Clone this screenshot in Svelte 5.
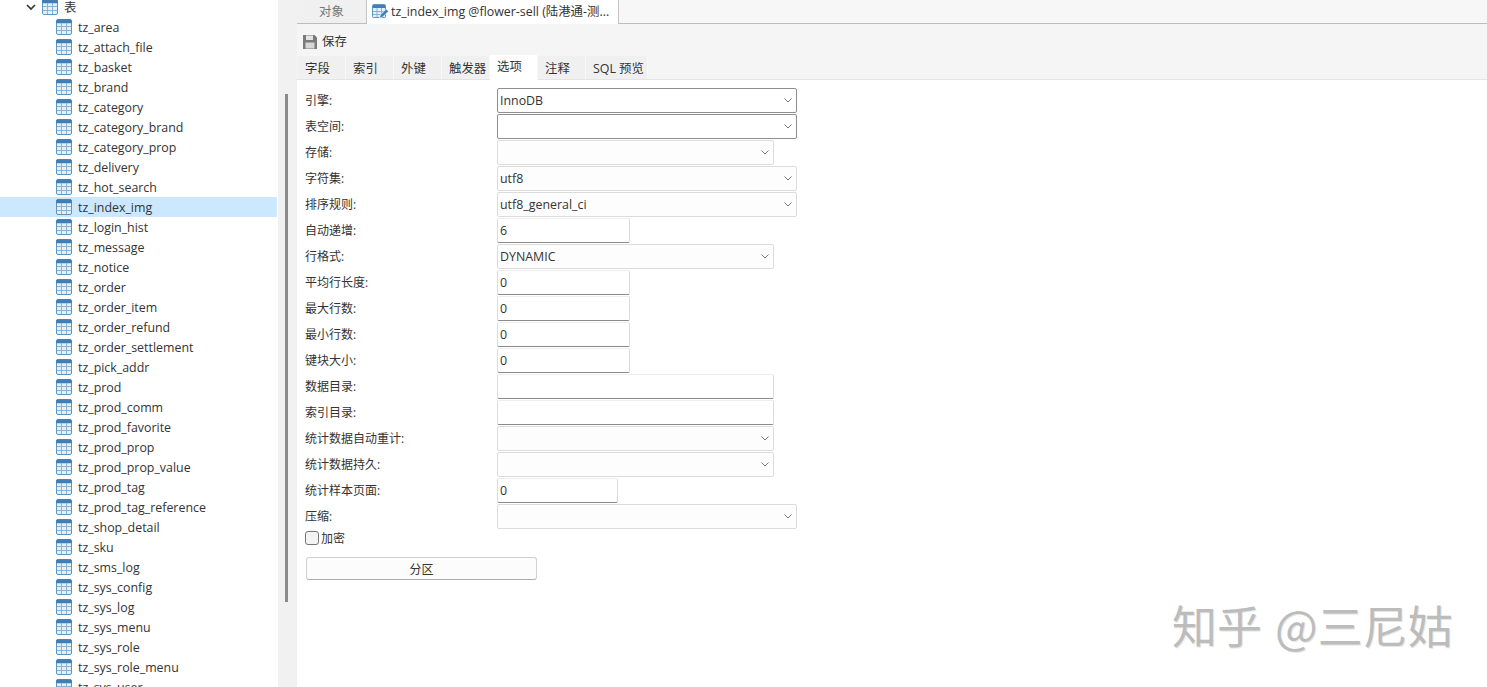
<script>
  const tables = ['tz_area','tz_attach_file','tz_basket','tz_brand','tz_category','tz_category_brand','tz_category_prop','tz_delivery','tz_hot_search','tz_index_img','tz_login_hist','tz_message','tz_notice','tz_order','tz_order_item','tz_order_refund','tz_order_settlement','tz_pick_addr','tz_prod','tz_prod_comm','tz_prod_favorite','tz_prod_prop','tz_prod_prop_value','tz_prod_tag','tz_prod_tag_reference','tz_shop_detail','tz_sku','tz_sms_log','tz_sys_config','tz_sys_log','tz_sys_menu','tz_sys_role','tz_sys_role_menu','tz_sys_user']

  const tabs = ['字段','索引','外键','触发器','选项','注释','SQL 预览']

  // size: wide 300, mid 277, num 133, small 121
  const rows = [
    { label: '引擎:', kind: 'select', size: 'wide', value: 'InnoDB', dark: true },
    { label: '表空间:', kind: 'select', size: 'wide', value: '', dark: true },
    { label: '存储:', kind: 'select', size: 'mid', value: '' },
    { label: '字符集:', kind: 'select', size: 'wide', value: 'utf8' },
    { label: '排序规则:', kind: 'select', size: 'wide', value: 'utf8_general_ci' },
    { label: '自动递增:', kind: 'input', size: 'num', value: '6' },
    { label: '行格式:', kind: 'select', size: 'mid', value: 'DYNAMIC' },
    { label: '平均行长度:', kind: 'input', size: 'num', value: '0' },
    { label: '最大行数:', kind: 'input', size: 'num', value: '0' },
    { label: '最小行数:', kind: 'input', size: 'num', value: '0' },
    { label: '键块大小:', kind: 'input', size: 'num', value: '0' },
    { label: '数据目录:', kind: 'input', size: 'mid', value: '' },
    { label: '索引目录:', kind: 'input', size: 'mid', value: '' },
    { label: '统计数据自动重计:', kind: 'select', size: 'mid', value: '' },
    { label: '统计数据持久:', kind: 'select', size: 'mid', value: '' },
    { label: '统计样本页面:', kind: 'input', size: 'small', value: '0' },
    { label: '压缩:', kind: 'select', size: 'wide', value: '' }
  ]
</script>

{#snippet tableIcon()}
  <svg class="table-icon" width="16" height="16" viewBox="0 0 16 16">
    <rect x="0.5" y="0.5" width="15" height="15" rx="1.5" fill="#e3eff9" stroke="#5a96c6" />
    <path d="M0.5 4V2a1.5 1.5 0 0 1 1.5-1.5h12A1.5 1.5 0 0 1 15.5 2v2z" fill="#3f7fb5" stroke="#3f7fb5" stroke-width="0.5" />
    <path d="M5.5 4v11M10.5 4v11M1 7.5h14M1 11.5h14" stroke="#86b4d9" fill="none" />
  </svg>
{/snippet}

<div class="app">
  <aside class="tree">
    <div class="tree-list">
      <div class="row root">
        <svg width="10" height="10" viewBox="0 0 10 10">
          <path d="M1 3l4 4 4-4" fill="none" stroke="#333" stroke-width="1.6" />
        </svg>
        {@render tableIcon()}
        <span>表</span>
      </div>
      {#each tables as name}
        <div class="row" class:selected={name === 'tz_index_img'}>
          {@render tableIcon()}
          <span>{name}</span>
        </div>
      {/each}
    </div>
  </aside>

  <div class="gutter">
    <div class="scroll-thumb"></div>
  </div>

  <main class="main">
    <div class="doc-tabs">
      <div class="doc-tab">对象</div>
      <div class="doc-tab active">
        <svg width="17" height="17" viewBox="0 0 17 17">
          <rect x="0.5" y="1.5" width="13" height="13" rx="1" fill="#e3eff9" stroke="#5a96c6" />
          <path d="M1 2h12v3H1z" fill="#3f7fb5" />
          <path d="M5 5v9M9.5 5v9M1 8.5h12M1 11.5h12" stroke="#86b4d9" fill="none" />
          <path d="M7.5 15l.8-3 6-6 2.2 2.2-6 6z" fill="#3f7fb5" stroke="#fff" stroke-width="0.6" />
        </svg>
        <span>tz_index_img @flower-sell (陆港通-测...</span>
      </div>
    </div>

    <div class="toolbar">
      <svg width="14" height="15" viewBox="0 0 14 15">
        <path d="M0 1h11.5L14 3.5V15H0z" fill="#7a7a7a" />
        <rect x="3" y="1.5" width="7" height="4.5" fill="#e4e4e4" />
        <rect x="2.5" y="8.5" width="9" height="6" fill="#d6d6d6" />
      </svg>
      <span>保存</span>
    </div>

    <div class="sub-tabs">
      {#each tabs as tab}
        <div class="sub-tab" class:active={tab === '选项'}>{tab}</div>
      {/each}
    </div>

    <div class="form">
      {#each rows as row}
        <div class="form-row">
          <span class="label">{row.label}</span>
          <div class="field {row.kind} {row.size}" class:dark={row.dark}>
            <span>{row.value}</span>
            {#if row.kind === 'select'}
              <svg width="8" height="5" viewBox="0 0 8 5">
                <path d="M0.5 0.5L4 4l3.5-3.5" fill="none" stroke="#777" />
              </svg>
            {/if}
          </div>
        </div>
      {/each}

      <label class="check">
        <span class="box"></span>
        <span>加密</span>
      </label>

      <button class="partition" type="button">分区</button>
    </div>

    <div class="watermark">知乎 @三尼姑</div>
  </main>
</div>

<style>
  :global(body) {
    margin: 0;
    background: #fff;
  }

  .app {
    display: flex;
    width: 1487px;
    height: 687px;
    overflow: hidden;
    font-family: "Open Sans", "Noto Sans CJK SC", sans-serif;
    font-size: 12.4px;
    color: #333;
  }

  .tree {
    width: 278px;
    flex: none;
    overflow: hidden;
    background: #fff;
  }

  .tree-list {
    width: 277px;
    margin-top: -3px;
  }

  .row {
    display: flex;
    align-items: center;
    gap: 6px;
    height: 20px;
    padding-left: 56px;
  }

  .row.root {
    padding-left: 26px;
  }

  .row.selected {
    background: #cce8ff;
  }

  .table-icon {
    flex: none;
  }

  .gutter {
    width: 19px;
    flex: none;
    background: #f1f1f1;
    padding: 94px 0 0 7px;
    box-sizing: border-box;
  }

  .scroll-thumb {
    width: 3px;
    height: 508px;
    background: #8a8a8a;
  }

  .main {
    position: relative;
    flex: 1;
    min-width: 0;
    display: flex;
    flex-direction: column;
  }

  .doc-tabs {
    display: flex;
    height: 24px;
    box-sizing: border-box;
    border-bottom: 1px solid #bdbdbd;
    background: #f7f7f7;
  }

  .doc-tab {
    width: 69px;
    height: 23px;
    padding-bottom: 2px;
    box-sizing: border-box;
    display: flex;
    align-items: center;
    justify-content: center;
    background: #f0f0f0;
    color: #777;
  }

  .doc-tab.active {
    width: 253px;
    height: 24px;
    gap: 2px;
    padding-left: 5px;
    justify-content: flex-start;
    white-space: nowrap;
    background: #fff;
    color: #333;
    border-left: 1px solid #c4c4c4;
    border-right: 1px solid #c4c4c4;
  }

  .toolbar {
    display: flex;
    align-items: center;
    gap: 5px;
    height: 32px;
    padding: 2px 0 0 6px;
    box-sizing: border-box;
    background: #f5f5f5;
  }

  .sub-tabs {
    display: flex;
    height: 24px;
    padding-left: 1px;
    background: #f5f5f5;
    border-bottom: 1px solid #e4e4e4;
    box-sizing: border-box;
  }

  .sub-tab {
    display: flex;
    align-items: center;
    width: 48px;
    height: 23px;
    padding-left: 7px;
    box-sizing: border-box;
    white-space: nowrap;
    background: #f0f0f0;
    border-right: 1px solid #f8f8f8;
  }

  .sub-tab:last-child {
    width: 62px;
  }

  .sub-tab.active {
    background: #fff;
    height: 25px;
    margin-top: -1px;
    padding-bottom: 3px;
  }

  .form {
    padding: 7px 0 0 8px;
    background: #fff;
    flex: 1;
  }

  .form-row {
    display: flex;
    align-items: center;
    height: 26px;
  }

  .label {
    width: 192px;
    flex: none;
    font-size: 12px;
  }

  .field {
    height: 25px;
    box-sizing: border-box;
    display: flex;
    align-items: center;
    justify-content: space-between;
    padding: 0 4px 0 2px;
    background: #fdfdfd;
    border: 1px solid #dcdcdc;
    border-radius: 2px;
  }

  .field.dark {
    border-color: #8e8e8e;
    background: #fff;
  }

  .field.input {
    border-bottom-color: #8a8a8a;
    border-top-color: #eeeeee;
    background: #fff;
  }

  .wide { width: 300px; }
  .mid { width: 277px; }
  .num { width: 133px; }
  .small { width: 121px; }

  .check {
    display: flex;
    align-items: center;
    gap: 2px;
    height: 18px;
    padding-left: 0;
    font-size: 12px;
  }

  .box {
    width: 12px;
    height: 12px;
    border: 1px solid #777;
    border-radius: 3px;
    background: #f3f3f3;
  }

  .partition {
    display: block;
    width: 231px;
    height: 23px;
    margin: 10px 0 0 1px;
    padding: 0;
    font: inherit;
    font-size: 12px;
    color: #333;
    background: #fcfcfc;
    border: 1px solid #d0d0d0;
    border-bottom-color: #acacac;
    border-radius: 3px;
  }

  .watermark {
    position: absolute;
    left: 875px;
    top: 597px;
    font-family: "Noto Sans CJK SC", sans-serif;
    font-size: 45px;
    line-height: 56px;
    word-spacing: 3px;
    white-space: nowrap;
    color: #bcbcbc;
    text-shadow: 1px 1px 0 #e6e6e6;
  }
</style>
